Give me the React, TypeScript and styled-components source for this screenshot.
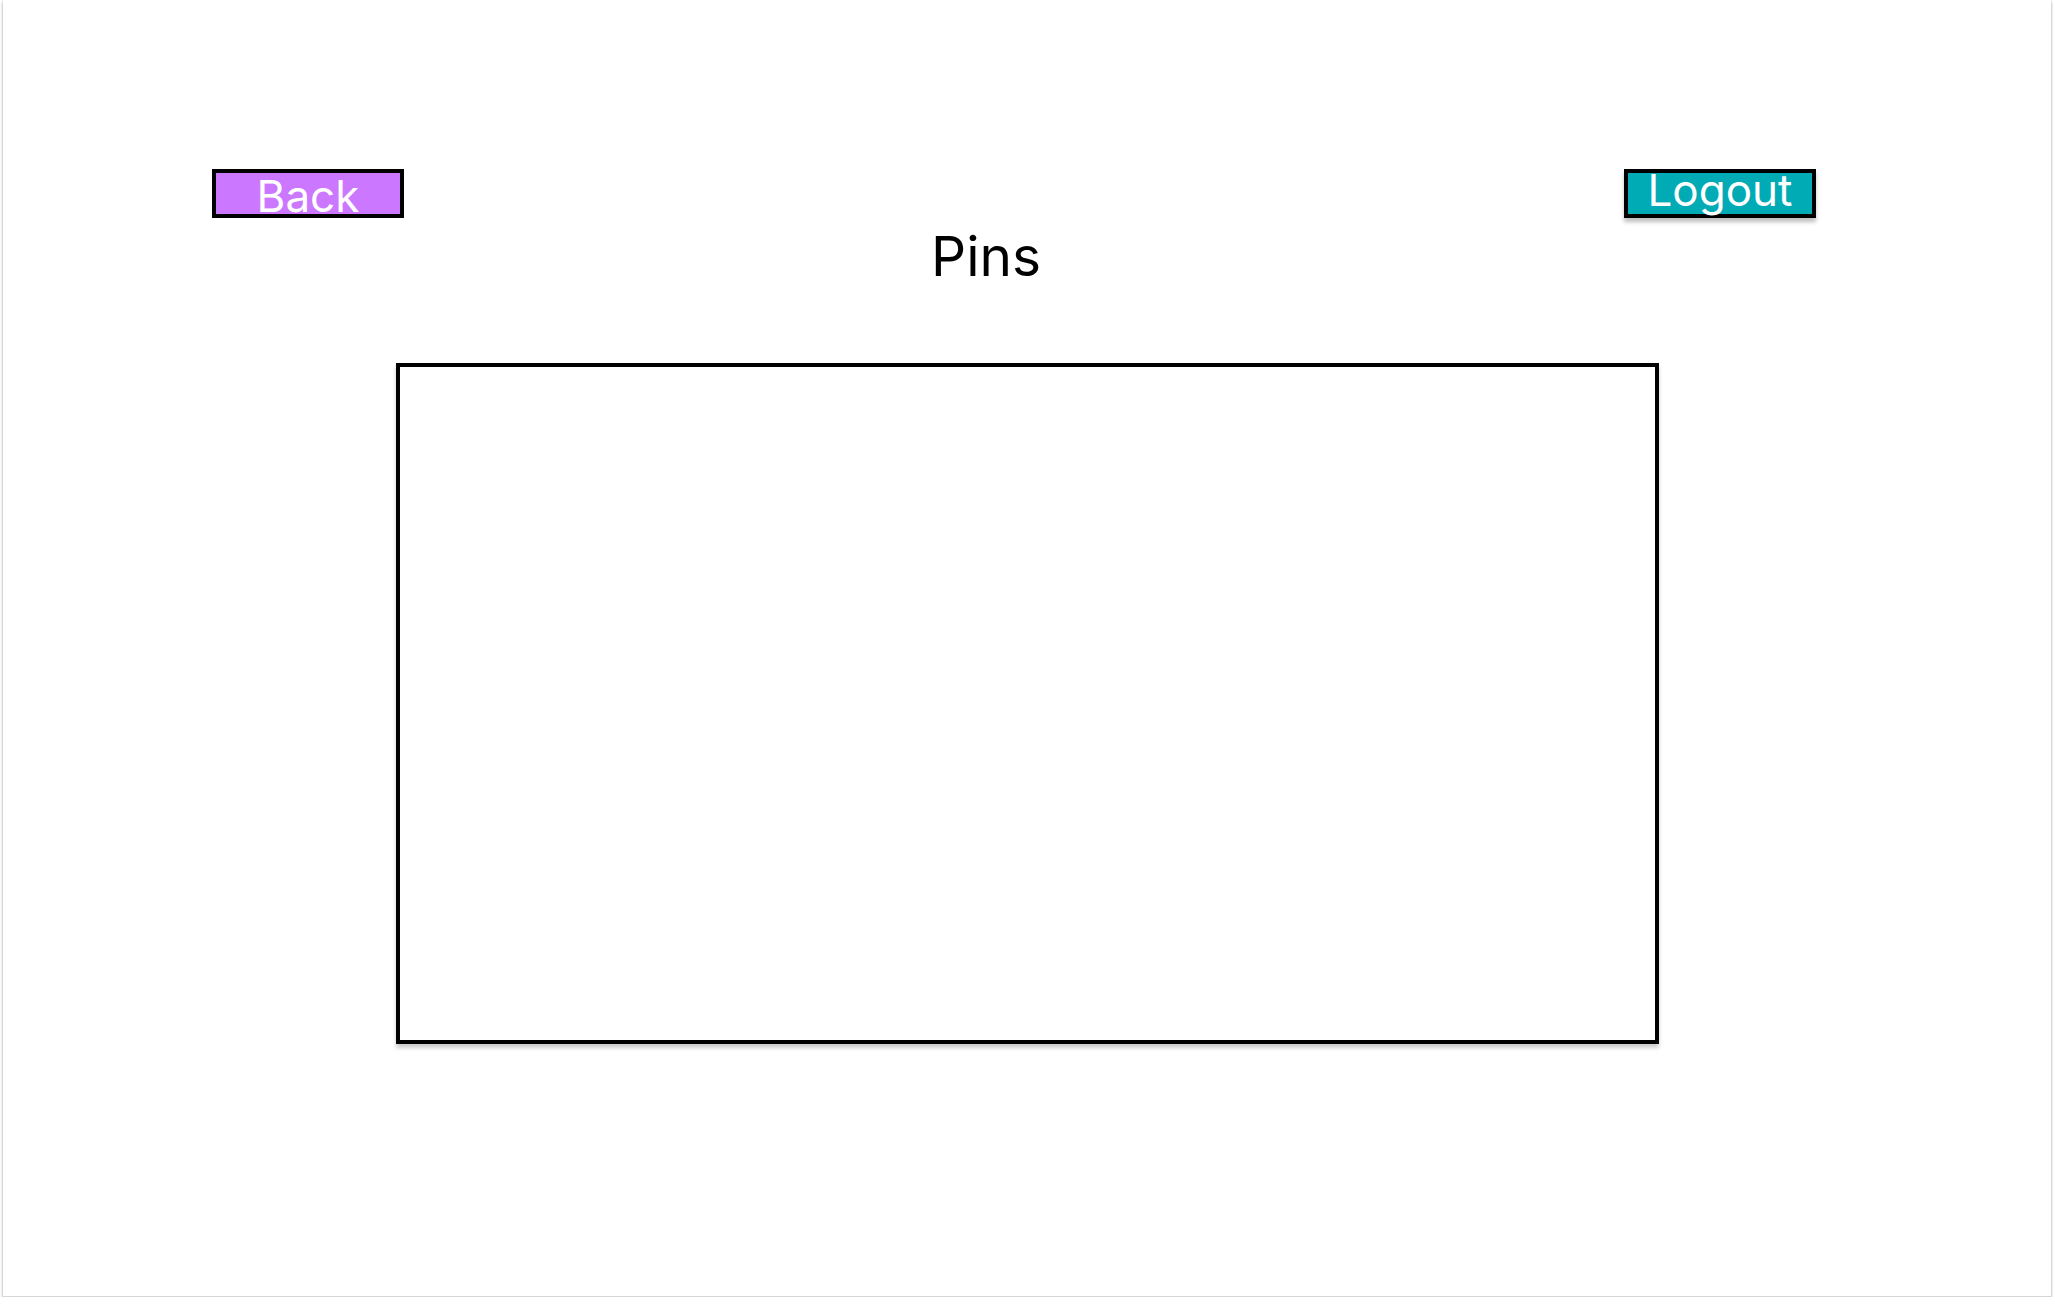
import React from 'react';
import styled, { createGlobalStyle } from 'styled-components';

const GlobalStyle = createGlobalStyle`
  html, body {
    margin: 0;
    padding: 0;
    background: #ffffff;
  }
  body {
    font-family: Inter, "Noto Sans", "Liberation Sans", sans-serif;
  }
`;

const Frame = styled.div`
  box-sizing: border-box;
  margin-left: 3px;
  width: 2048px;
  height: 1297px;
  background: #ffffff;
  border-bottom: 1px solid #d6d6d6;
  box-shadow: 0 2px 3px rgba(0, 0, 0, 0.3), 0 0 2px rgba(0, 0, 0, 0.15);
  padding-top: 169px;
  display: flex;
  flex-direction: column;
`;

const Header = styled.div`
  display: flex;
  justify-content: space-between;
  align-items: flex-start;
  padding: 0 235px 0 209px;
`;

type ButtonProps = {
  $bg: string;
  $shadow?: boolean;
};

const Button = styled.button<ButtonProps>`
  box-sizing: border-box;
  width: 192px;
  height: 49px;
  padding: 0;
  margin: 0;
  border: 4px solid #000000;
  border-radius: 0;
  background: ${({ $bg }) => $bg};
  box-shadow: ${({ $shadow }) => ($shadow ? '0 4px 4px rgba(0, 0, 0, 0.25)' : 'none')};
  display: flex;
  justify-content: center;
  align-items: flex-start;
  overflow: visible;
  cursor: pointer;
`;

const Label = styled.span<{ $offset: number }>`
  display: block;
  margin-top: ${({ $offset }) => $offset}px;
  color: #ffffff;
  font-family: Inter, "Noto Sans", sans-serif;
  font-size: 44px;
  font-weight: 400;
  line-height: 44px;
  white-space: nowrap;
`;

const Title = styled.h1`
  margin: 5px 0 0;
  padding-right: 82px;
  text-align: center;
  font-family: Inter, "Noto Sans", sans-serif;
  font-size: 55px;
  font-weight: 400;
  line-height: normal;
  color: #000000;
`;

const PinsBox = styled.div`
  box-sizing: border-box;
  margin: 74px 0 0 393px;
  width: 1263px;
  height: 681px;
  border: 4px solid #000000;
  background: #ffffff;
  box-shadow: 0 4px 4px rgba(0, 0, 0, 0.2);
`;

export default function App() {
  return (
    <>
      <GlobalStyle />
      <Frame>
        <Header>
          <Button $bg="#cc77ff">
            <Label $offset={1}>Back</Label>
          </Button>
          <Button $bg="#00abb5" $shadow>
            <Label $offset={-5}>Logout</Label>
          </Button>
        </Header>
        <Title>Pins</Title>
        <PinsBox />
      </Frame>
    </>
  );
}
